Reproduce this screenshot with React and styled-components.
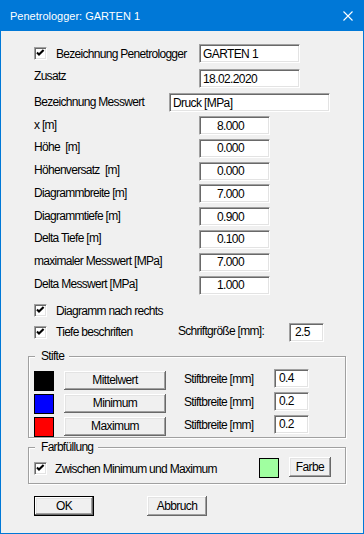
import styled, { createGlobalStyle } from 'styled-components';

const GlobalStyle = createGlobalStyle`
  html, body {
    margin: 0;
    padding: 0;
    background: #ffffff;
  }
  body {
    font-family: 'Liberation Sans', Arial, sans-serif;
  }
`;

const Window = styled.div`
  box-sizing: border-box;
  width: 364px;
  height: 534px;
  display: flex;
  flex-direction: column;
  border: 1px solid #0078d7;
  border-top: none;
  background: #f0f0f0;
`;

const TitleBar = styled.div`
  flex: none;
  height: 31px;
  display: flex;
  align-items: center;
  justify-content: space-between;
  padding: 0 10px 0 9px;
  background: #0078d7;
  color: #ffffff;
  font-size: 11px;
`;

const Body = styled.div`
  flex: 1;
  display: flex;
  flex-direction: column;
  padding: 13px 17px 0 27px;
  font-size: 12px;
  letter-spacing: -0.7px;
  color: #000000;
`;

const Row = styled.div`
  display: grid;
  grid-template-columns: ${({ $cols }) => $cols};
  align-items: center;
  height: ${({ $h }) => $h || 19}px;
  margin-top: ${({ $gap }) => $gap || 0}px;
  padding-left: 6px;
`;

const Stack = styled.div`
  display: flex;
  flex-direction: column;
  gap: 3.8px;
  margin-top: ${({ $gap }) => $gap}px;
`;

const Label = styled.span`
  line-height: 14px;
  white-space: pre;
  margin-bottom: ${({ $lift }) => ($lift === undefined ? 2 : $lift)}px;
`;

const CheckLabel = styled.label`
  display: flex;
  align-items: center;
  gap: ${({ $gap }) => $gap || 9}px;
  line-height: 14px;
  white-space: nowrap;
  width: ${({ $w }) => ($w ? `${$w}px` : 'auto')};
  margin-top: ${({ $top }) => $top || 0}px;
`;

const Box = styled.span`
  box-sizing: border-box;
  flex: none;
  width: 13px;
  height: 13px;
  border: 1px solid;
  border-color: #a0a0a0 #ffffff #ffffff #a0a0a0;
  box-shadow: inset 1px 1px #696969, inset -1px -1px #e3e3e3;
  background: #ffffff;

  svg {
    display: block;
  }
`;

const Field = styled.input`
  box-sizing: border-box;
  width: ${({ $w }) => $w}px;
  height: 19px;
  margin: 0;
  padding: 0 ${({ $center }) => ($center ? 8 : 0)}px 0 ${({ $pad }) => $pad || 0}px;
  border: 1px solid;
  border-color: #a0a0a0 #ffffff #ffffff #a0a0a0;
  box-shadow: inset 1px 1px #696969, inset -1px -1px #e3e3e3;
  background: #ffffff;
  color: #000000;
  font: 12px 'Liberation Sans', Arial, sans-serif;
  letter-spacing: -0.6px;
  text-align: ${({ $center }) => ($center ? 'center' : 'left')};
  outline: none;
  align-self: ${({ $raise }) => ($raise ? 'start' : 'center')};
  margin-top: ${({ $raise }) => ($raise ? -$raise : 0)}px;
`;

const Button = styled.button`
  box-sizing: border-box;
  flex: none;
  width: ${({ $w }) => $w}px;
  height: ${({ $h }) => $h || 20}px;
  margin: 0 0 0 ${({ $left }) => $left || 0}px;
  padding: 0;
  border: ${({ $default }) => ($default ? '1px solid #000000' : 'none')};
  background: #f0f0f0;
  box-shadow: inset -1px -1px #696969, inset 1px 1px #ffffff,
    inset -2px -2px #a0a0a0, inset 2px 2px #e3e3e3;
  color: #000000;
  font: 12px 'Liberation Sans', Arial, sans-serif;
  letter-spacing: -0.6px;
`;

const Swatch = styled.span`
  box-sizing: border-box;
  flex: none;
  width: 20px;
  height: 20px;
  border: 1px solid #000000;
  background: ${({ $color }) => $color};
  margin: ${({ $top }) => $top || 0}px ${({ $right }) => $right || 0}px 0 0;
`;

const Group = styled.fieldset`
  box-sizing: border-box;
  width: 318px;
  min-width: 0;
  margin: ${({ $gap }) => $gap}px 0 0 0;
  padding: ${({ $pt }) => $pt}px 0 ${({ $pb }) => $pb}px 5px;
  border: 1px solid #a0a0a0;
  box-shadow: inset 1px 1px #ffffff, 1px 1px #ffffff;
  display: flex;
  flex-direction: column;
  gap: 3px;
`;

const GroupTitle = styled.legend`
  margin-left: 1px;
  padding: 0 5px 0 6px;
  line-height: 15px;
  background: #f0f0f0;
`;

const PenRow = styled.div`
  display: flex;
  align-items: flex-start;
  height: 20px;
`;

const PenLabel = styled.span`
  width: 90px;
  margin-left: 18px;
  line-height: 14px;
  padding-top: 1px;
  white-space: nowrap;
`;

const Actions = styled.div`
  display: flex;
  margin-top: 12px;
  padding-left: 6px;
`;

function CloseIcon() {
  return (
    <svg width="10" height="10" viewBox="0 0 10 10">
      <path d="M0.5 0.5 L9.5 9.5 M9.5 0.5 L0.5 9.5" stroke="#ffffff" strokeWidth="1.1" />
    </svg>
  );
}

function Checkbox() {
  return (
    <Box>
      <svg width="11" height="11" viewBox="0 0 11 11">
        <polyline points="2,4.5 4,6.6 8.6,2" fill="none" stroke="#000000" strokeWidth="2.1" />
      </svg>
    </Box>
  );
}

const numbers = [
  ['x [m]', '8.000'],
  ['Höhe  [m]', '0.000'],
  ['Höhenversatz  [m]', '0.000'],
  ['Diagrammbreite [m]', '7.000'],
  ['Diagrammtiefe [m]', '0.900'],
  ['Delta Tiefe [m]', '0.100'],
  ['maximaler Messwert [MPa]', '7.000'],
  ['Delta Messwert [MPa]', '1.000'],
];

const pens = [
  { color: '#000000', name: 'Mittelwert', width: '0.4' },
  { color: '#0000ff', name: 'Minimum', width: '0.2' },
  { color: '#ff0000', name: 'Maximum', width: '0.2' },
];

export default function App() {
  return (
    <>
      <GlobalStyle />
      <Window>
        <TitleBar>
          <span>Penetrologger: GARTEN 1</span>
          <CloseIcon />
        </TitleBar>
        <Body>
          <Row $cols="165px 101px">
            <CheckLabel>
              <Checkbox />
              Bezeichnung Penetrologger
            </CheckLabel>
            <Field $w={101} $pad={3} readOnly value="GARTEN 1" />
          </Row>
          <Row $cols="165px 101px" $gap={6}>
            <Label $lift={5}>Zusatz</Label>
            <Field $w={101} $pad={3} readOnly value="18.02.2020" />
          </Row>
          <Row $cols="135px 161px" $gap={5}>
            <Label>Bezeichnung Messwert</Label>
            <Field $w={161} $pad={3} readOnly value="Druck [MPa]" />
          </Row>
          <Stack $gap={4}>
            {numbers.map(([label, value]) => (
              <Row key={label} $cols="165px 71px">
                <Label>{label}</Label>
                <Field $w={71} $center readOnly value={value} />
              </Row>
            ))}
          </Stack>
          <Row $cols="auto" $h={13} $gap={9}>
            <CheckLabel>
              <Checkbox />
              Diagramm nach rechts
            </CheckLabel>
          </Row>
          <Row $cols="144px 111px 35px" $gap={6}>
            <CheckLabel>
              <Checkbox />
              Tiefe beschriften
            </CheckLabel>
            <Label>Schriftgröße [mm]:</Label>
            <Field $w={35} $pad={5} readOnly value="2.5" />
          </Row>
          <Group $gap={7} $pt={7} $pb={0}>
            <GroupTitle>Stifte</GroupTitle>
            {pens.map((pen) => (
              <PenRow key={pen.name}>
                <Swatch $color={pen.color} />
                <Button $w={102} $h={19} $left={10}>{pen.name}</Button>
                <PenLabel>Stiftbreite [mm]</PenLabel>
                <Field $w={35} $pad={4} $raise={2} readOnly value={pen.width} />
              </PenRow>
            ))}
          </Group>
          <Group $gap={2} $pt={2} $pb={6}>
            <GroupTitle>Farbfüllung</GroupTitle>
            <PenRow>
              <CheckLabel $gap={8} $w={225} $top={5}>
                <Checkbox />
                Zwischen Minimum und Maximum
              </CheckLabel>
              <Swatch $color="#a0ffa0" $top={1} $right={10} />
              <Button $w={42}>Farbe</Button>
            </PenRow>
          </Group>
          <Actions>
            <Button $w={60} $default>OK</Button>
            <Button $w={60} $left={53}>Abbruch</Button>
          </Actions>
        </Body>
      </Window>
    </>
  );
}
